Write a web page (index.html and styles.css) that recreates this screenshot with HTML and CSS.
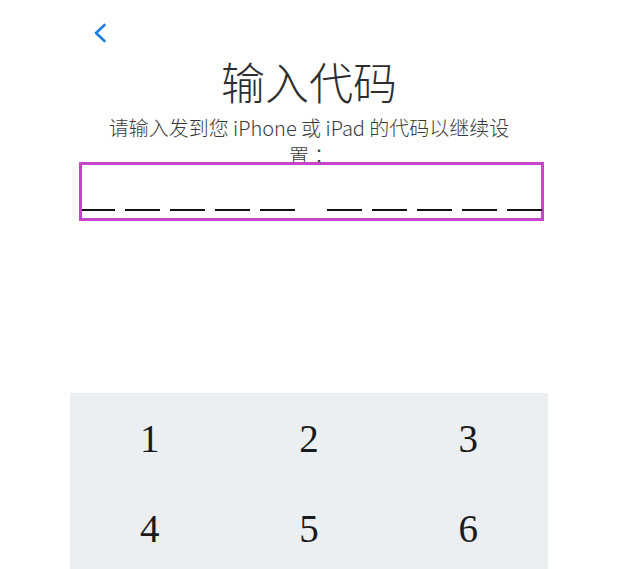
FILE: index.html
```html
<!DOCTYPE html>
<html lang="zh">
<head>
<meta charset="utf-8">
<title>输入代码</title>
<link rel="stylesheet" href="styles.css">
</head>
<body>
<div class="screen">
  <div class="topbar">
    <svg class="back" width="14" height="20" viewBox="0 0 14 20">
      <path d="M11.5 2 L3 10 L11.5 18" fill="none" stroke="#1e7ee4" stroke-width="2.6" stroke-linecap="round" stroke-linejoin="round"/>
    </svg>
  </div>
  <h1 class="title">输入代码</h1>
  <p class="subtitle">请输入发到您 iPhone 或 iPad 的代码以继续设置<span class="colon" lang="zh-Hant">：</span></p>
  <div class="code-box">
    <div class="group">
      <span class="dash first"></span><span class="dash"></span><span class="dash"></span><span class="dash"></span><span class="dash"></span>
    </div>
    <div class="group">
      <span class="dash"></span><span class="dash"></span><span class="dash"></span><span class="dash"></span><span class="dash"></span>
    </div>
  </div>
  <div class="keypad">
    <div class="key">1</div>
    <div class="key">2</div>
    <div class="key">3</div>
    <div class="key">4</div>
    <div class="key">5</div>
    <div class="key">6</div>
  </div>
</div>
</body>
</html>
```

FILE: styles.css
```css
html, body {
  margin: 0;
  padding: 0;
  background: #ffffff;
  overflow: hidden;
}
.screen {
  width: 618px;
  height: 569px;
  overflow: hidden;
  font-family: "Noto Sans CJK SC", "Noto Sans", sans-serif;
  color: #333333;
}
.topbar {
  height: 56px;
  padding: 23px 0 0 93px;
  box-sizing: border-box;
}
.back {
  display: block;
}
.title {
  margin: 0;
  font-size: 44px;
  line-height: 50px;
  font-weight: 300;
  text-align: center;
  color: #2e2e2e;
}
.subtitle {
  margin: 8px auto 0;
  width: 420px;
  font-size: 20px;
  line-height: 28px;
  font-weight: 300;
  text-align: center;
  color: #3a3a3a;
}
.colon {
  font-family: "Noto Sans CJK TC", "Noto Sans CJK SC", sans-serif;
}
.code-box {
  position: relative;
  margin: -8px 0 0 79px;
  width: 465px;
  height: 59px;
  box-sizing: border-box;
  border: 3px solid #c545cb;
  display: flex;
  align-items: flex-end;
  padding: 0 0 7px 0;
  gap: 32px;
}
.group {
  display: flex;
  gap: 10px;
}
.dash {
  display: block;
  width: 35px;
  height: 2px;
  background: #111111;
}
.dash.first {
  width: 33px;
}
.keypad {
  margin: 172px 0 0 70px;
  width: 478px;
  background: #eceff2;
  display: grid;
  grid-template-columns: repeat(3, 1fr);
  grid-auto-rows: 90px;
}
.key {
  display: flex;
  align-items: center;
  justify-content: center;
  font-family: "Liberation Serif", serif;
  font-size: 39px;
  color: #1a1a1a;
}
```
